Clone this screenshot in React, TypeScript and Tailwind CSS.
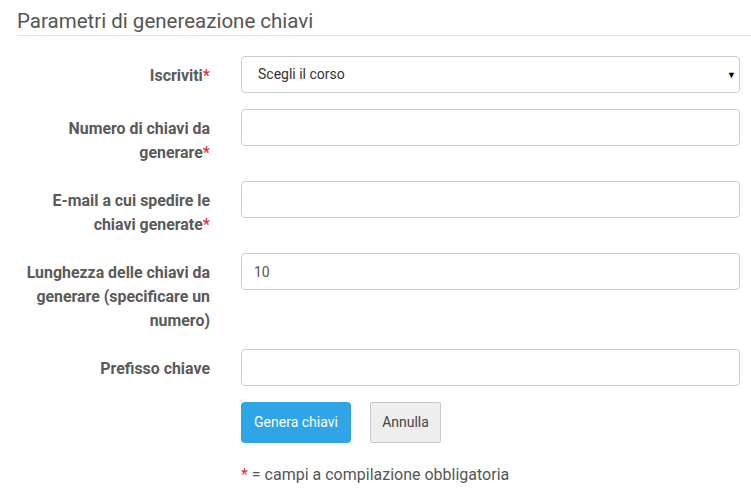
import React from 'react';

const Req = () => <span className="text-[#e0333f]">*</span>;

const Row: React.FC<{ label: React.ReactNode; children: React.ReactNode }> = ({ label, children }) => (
  <div className="flex items-start mb-[16px]">
    <label className="w-[211px] shrink-0 pr-[1px] pt-[8px] text-right text-[15.9px] leading-[24px] font-bold text-[#5a5a5a]">
      {label}
    </label>
    <div className="ml-[30px] w-[499px]">{children}</div>
  </div>
);

const inputCls =
  'block w-full h-[37px] rounded-[4px] border border-[#cccccc] bg-white px-[12px] text-[14px] text-[#555] outline-none';

export default function App() {
  return (
    <div className="bg-white min-h-[491px] w-[751px] font-['Roboto',sans-serif] text-[#555]">
      <div className="pl-[17px] pt-[9px]">
        <h2 className="text-[20.5px] leading-[25px] pb-[1px] border-b border-[#e5e5e5] text-[#555] font-normal">
          Parametri di genereazione chiavi
        </h2>
      </div>
      <div className="pt-[20px]">
        <Row
          label={
            <>
              Iscriviti
              <Req />
            </>
          }
        >
          <div className={inputCls + ' relative flex items-center !pl-[16px]'}>
            <span className="text-[14px] text-[#333]">Scegli il corso</span>
            <span className="absolute right-[3px] top-[12px] text-[9px] text-black">▼</span>
          </div>
        </Row>
        <Row
          label={
            <>
              Numero di chiavi da
              <br />
              generare
              <Req />
            </>
          }
        >
          <input className={inputCls} />
        </Row>
        <Row
          label={
            <>
              E-mail a cui spedire le
              <br />
              chiavi generate
              <Req />
            </>
          }
        >
          <input className={inputCls} />
        </Row>
        <Row
          label={
            <>
              Lunghezza delle chiavi da
              <br />
              generare (specificare un
              <br />
              numero)
            </>
          }
        >
          <input className={inputCls} defaultValue="10" />
        </Row>
        <Row label="Prefisso chiave">
          <input className={inputCls} />
        </Row>
        <div className="ml-[241px] flex items-start gap-[19px]">
          <button className="h-[41px] w-[110px] rounded-[4px] bg-[#2fa4e7] text-white text-[14px]">
            Genera chiavi
          </button>
          <button className="h-[41px] w-[71px] rounded-[2px] bg-[#eeeeef] border border-[#c8c8c8] text-[#444] text-[14px]">
            Annulla
          </button>
        </div>
        <p className="ml-[241px] mt-[20px] text-[16px] text-[#555]">
          <Req /> = campi a compilazione obbligatoria
        </p>
      </div>
    </div>
  );
}
